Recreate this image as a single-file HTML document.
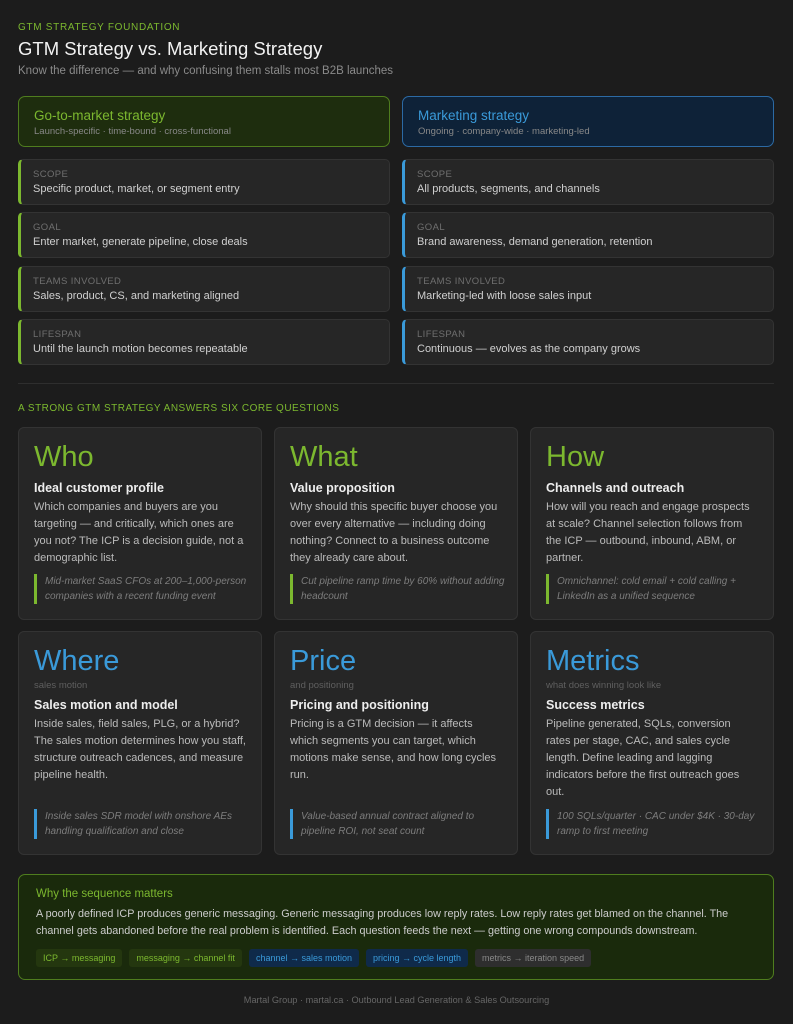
<!DOCTYPE html>
<html><head><meta charset="utf-8"><style>
*{box-sizing:border-box;margin:0;padding:0}
body{width:793px;height:1024px;background:#1c1c1c;font-family:"Liberation Sans",sans-serif;color:#ddd;position:relative;overflow:hidden}
.a{position:absolute}
.eyebrow{font-size:10px;letter-spacing:.7px;color:#7cb82f}
.pill{position:absolute;height:51px;width:372px;border-radius:7px;padding:11px 15px}
.pill .t{font-size:13.5px}
.pill .s{font-size:9.5px;color:#888;margin-top:3px}
.row{position:absolute;width:372px;height:46px;background:#262626;border:1px solid #333;border-radius:5px;padding:9px 12px}
.row .l{font-size:9.5px;color:#6f6f6f;letter-spacing:.4px}
.row .v{font-size:11px;color:#d0d0d0;margin-top:3px}
.g{border-left:3px solid #7cb82f}
.b{border-left:3px solid #3a9ad9}
.card{position:absolute;width:244px;background:#262626;border:1px solid #333;border-radius:6px;padding:12px 15px}
.card h2{font-size:29px;font-weight:normal;line-height:35px}
.card .sub{font-size:9.5px;color:#5f5f5f;margin-top:1px;margin-bottom:6px}
.card h3{font-size:12.5px;font-weight:bold;color:#eee;margin-top:5px;line-height:17px}
.card p{font-size:11px;color:#bbb;line-height:17px;margin-top:2px}
.q{position:absolute;left:15px;right:12px;font-style:italic;font-size:10px;color:#7d7d7d;line-height:15px;padding-left:8px}
.tag{display:inline-block;font-size:9px;padding:4px 7px;border-radius:3px;margin-right:7px}
</style></head><body>
<div class="a eyebrow" style="left:18px;top:22px">GTM STRATEGY FOUNDATION</div>
<div class="a" style="left:18px;top:38px;font-size:18.5px;color:#f2f2f2">GTM Strategy vs. Marketing Strategy</div>
<div class="a" style="left:18px;top:65px;font-size:11.5px;color:#8a8a8a">Know the difference — and why confusing them stalls most B2B launches</div>

<div class="pill" style="left:18px;top:96px;background:#1e2d0e;border:1px solid #4f7d1e"><div class="t" style="color:#7cb82f">Go-to-market strategy</div><div class="s">Launch-specific · time-bound · cross-functional</div></div>
<div class="pill" style="left:402px;top:96px;background:#0e2238;border:1px solid #2c6aa4"><div class="t" style="color:#3a9ad9">Marketing strategy</div><div class="s">Ongoing · company-wide · marketing-led</div></div>

<div class="row g" style="left:18px;top:159px"><div class="l">SCOPE</div><div class="v">Specific product, market, or segment entry</div></div>
<div class="row g" style="left:18px;top:212px"><div class="l">GOAL</div><div class="v">Enter market, generate pipeline, close deals</div></div>
<div class="row g" style="left:18px;top:266px"><div class="l">TEAMS INVOLVED</div><div class="v">Sales, product, CS, and marketing aligned</div></div>
<div class="row g" style="left:18px;top:319px"><div class="l">LIFESPAN</div><div class="v">Until the launch motion becomes repeatable</div></div>
<div class="row b" style="left:402px;top:159px"><div class="l">SCOPE</div><div class="v">All products, segments, and channels</div></div>
<div class="row b" style="left:402px;top:212px"><div class="l">GOAL</div><div class="v">Brand awareness, demand generation, retention</div></div>
<div class="row b" style="left:402px;top:266px"><div class="l">TEAMS INVOLVED</div><div class="v">Marketing-led with loose sales input</div></div>
<div class="row b" style="left:402px;top:319px"><div class="l">LIFESPAN</div><div class="v">Continuous — evolves as the company grows</div></div>

<div class="a" style="left:18px;top:383px;width:756px;height:1px;background:#2e2e2e"></div>
<div class="a eyebrow" style="left:18px;top:403px;letter-spacing:.5px">A STRONG GTM STRATEGY ANSWERS SIX CORE QUESTIONS</div>

<div class="card" style="left:18px;top:427px;height:193px"><h2 style="color:#7cb82f">Who</h2><h3>Ideal customer profile</h3><p>Which companies and buyers are you targeting — and critically, which ones are you not? The ICP is a decision guide, not a demographic list.</p><div class="q g" style="top:146px">Mid-market SaaS CFOs at 200–1,000-person companies with a recent funding event</div></div>
<div class="card" style="left:274px;top:427px;height:193px"><h2 style="color:#7cb82f">What</h2><h3>Value proposition</h3><p>Why should this specific buyer choose you over every alternative — including doing nothing? Connect to a business outcome they already care about.</p><div class="q g" style="top:146px">Cut pipeline ramp time by 60% without adding headcount</div></div>
<div class="card" style="left:530px;top:427px;height:193px"><h2 style="color:#7cb82f">How</h2><h3>Channels and outreach</h3><p>How will you reach and engage prospects at scale? Channel selection follows from the ICP — outbound, inbound, ABM, or partner.</p><div class="q g" style="top:146px">Omnichannel: cold email + cold calling + LinkedIn as a unified sequence</div></div>

<div class="card" style="left:18px;top:631px;height:224px"><h2 style="color:#3a9ad9">Where</h2><div class="sub">sales motion</div><h3>Sales motion and model</h3><p>Inside sales, field sales, PLG, or a hybrid? The sales motion determines how you staff, structure outreach cadences, and measure pipeline health.</p><div class="q b" style="top:177px">Inside sales SDR model with onshore AEs handling qualification and close</div></div>
<div class="card" style="left:274px;top:631px;height:224px"><h2 style="color:#3a9ad9">Price</h2><div class="sub">and positioning</div><h3>Pricing and positioning</h3><p>Pricing is a GTM decision — it affects which segments you can target, which motions make sense, and how long cycles run.</p><div class="q b" style="top:177px">Value-based annual contract aligned to pipeline ROI, not seat count</div></div>
<div class="card" style="left:530px;top:631px;height:224px"><h2 style="color:#3a9ad9">Metrics</h2><div class="sub">what does winning look like</div><h3>Success metrics</h3><p>Pipeline generated, SQLs, conversion rates per stage, CAC, and sales cycle length. Define leading and lagging indicators before the first outreach goes out.</p><div class="q b" style="top:177px">100 SQLs/quarter · CAC under $4K · 30-day ramp to first meeting</div></div>

<div class="a" style="left:18px;top:874px;width:756px;height:106px;background:#1a2a0c;border:1px solid #4f7d1e;border-radius:7px;padding:13px 17px">
<div style="font-size:11.5px;color:#7cb82f">Why the sequence matters</div>
<div style="font-size:10.8px;color:#ccc;line-height:17px;margin-top:6px">A poorly defined ICP produces generic messaging. Generic messaging produces low reply rates. Low reply rates get blamed on the channel. The channel gets abandoned before the real problem is identified. Each question feeds the next — getting one wrong compounds downstream.</div>
<div style="margin-top:8px"><span class="tag" style="background:#24370f;color:#7cb82f">ICP → messaging</span><span class="tag" style="background:#24370f;color:#7cb82f">messaging → channel fit</span><span class="tag" style="background:#0f2a4a;color:#3a9ad9">channel → sales motion</span><span class="tag" style="background:#0f2a4a;color:#3a9ad9">pricing → cycle length</span><span class="tag" style="background:#2e2e2e;color:#888">metrics → iteration speed</span></div>
</div>
<div class="a" style="left:0;width:793px;top:995px;text-align:center;font-size:9.2px;color:#666">Martal Group · martal.ca · Outbound Lead Generation &amp; Sales Outsourcing</div>
</body></html>
